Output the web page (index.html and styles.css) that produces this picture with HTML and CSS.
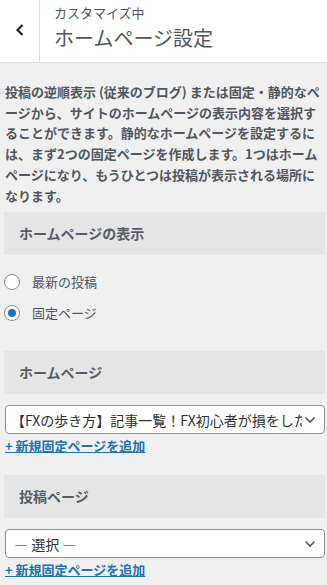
FILE: index.html
```html
<!DOCTYPE html>
<html lang="ja">
<head>
    <meta charset="UTF-8">
    <meta name="viewport" content="width=device-width, initial-scale=1.0">
    <title>ホームページ設定</title>
    <link rel="stylesheet" href="styles.css">
</head>
<body>
    <div class="header">
        <button class="back" aria-label="戻る">
            <svg width="10" height="14" viewBox="0 0 10 14"><path d="M7.5 2 L2.5 7 L7.5 12" fill="none" stroke="#1d2327" stroke-width="2.2"/></svg>
        </button>
        <div class="titles">
            <div class="sub">カスタマイズ中</div>
            <div class="main">ホームページ設定</div>
        </div>
    </div>

    <div class="content">
        <p class="desc">投稿の逆順表示 (従来のブログ) または固定・静的なページから、サイトのホームページの表示内容を選択することができます。静的なホームページを設定するには、まず2つの固定ページを作成します。1つはホームページになり、もうひとつは投稿が表示される場所になります。</p>

        <div class="section-title first">ホームページの表示</div>
        <div class="radios">
            <label class="radio"><span class="dot"></span>最新の投稿</label>
            <label class="radio"><span class="dot checked"></span>固定ページ</label>
        </div>

        <div class="section-title">ホームページ</div>
        <div class="select">
            <span class="value">【FXの歩き方】記事一覧！FX初心者が損をした理由</span>
            <svg class="chev" width="12" height="8" viewBox="0 0 12 8"><path d="M1.5 1.5 L6 6 L10.5 1.5" fill="none" stroke="#50575e" stroke-width="1.6"/></svg>
        </div>
        <a class="add" href="#">+ 新規固定ページを追加</a>

        <div class="section-title after-link">投稿ページ</div>
        <div class="select">
            <span class="value plain">— 選択 —</span>
            <svg class="chev" width="12" height="8" viewBox="0 0 12 8"><path d="M1.5 1.5 L6 6 L10.5 1.5" fill="none" stroke="#50575e" stroke-width="1.6"/></svg>
        </div>
        <a class="add" href="#">+ 新規固定ページを追加</a>
    </div>
</body>
</html>
```

FILE: styles.css
```css
* {
    margin: 0;
    padding: 0;
    box-sizing: border-box;
}

body {
    background-color: #f0f0f1;
    font-family: "Noto Sans CJK JP", "Noto Sans", sans-serif;
    color: #50575e;
    overflow: hidden;
}

.header {
    display: flex;
    height: 63px;
    background-color: #fff;
    border-bottom: 1px solid #dcdcde;
}

.back {
    width: 40px;
    border: none;
    border-right: 1px solid #dcdcde;
    background: #fff;
    display: flex;
    align-items: center;
    justify-content: center;
    padding-bottom: 2px;
}

.titles {
    padding: 4px 0 0 14px;
}

.sub {
    font-size: 13px;
    line-height: 18px;
    color: #50575e;
}

.main {
    font-size: 20px;
    line-height: 30px;
    margin-top: 1px;
    color: #50575e;
}

.content {
    padding: 0 2px 0 4px;
}

.desc {
    margin-top: 19px;
    padding-left: 1px;
    font-size: 13px;
    line-height: 20.7px;
    font-weight: bold;
    color: #50575e;
}

.section-title {
    height: 43px;
    line-height: 43px;
    margin-top: 23px;
    padding-left: 15px;
    background-color: #e5e5e5;
    font-size: 14px;
    font-weight: bold;
    color: #555d66;
}

.section-title.first {
    margin-top: 6px;
}

.section-title.after-link {
    margin-top: 20px;
}

.radios {
    margin-top: 11px;
}

.radio {
    display: flex;
    align-items: center;
    height: 31px;
    font-size: 13px;
    color: #50575e;
}

.dot {
    width: 16px;
    height: 16px;
    border: 1px solid #8c8f94;
    border-radius: 50%;
    background-color: #fff;
    margin-right: 12px;
    display: flex;
    align-items: center;
    justify-content: center;
}

.dot.checked::after {
    content: "";
    width: 8px;
    height: 8px;
    border-radius: 50%;
    background-color: #2271b1;
}

.select {
    display: flex;
    align-items: center;
    height: 29px;
    margin: 11px 0 0 1px;
    padding: 0 8px 0 5px;
    background-color: #fff;
    border: 1px solid #8c8f94;
    border-radius: 4px;
    font-size: 14px;
    color: #2c3338;
}

.value {
    flex: 1;
    white-space: nowrap;
    overflow: hidden;
    margin-right: 2px;
}

.value.plain {
    padding-left: 3px;
}

.chev {
    flex-shrink: 0;
}

.add {
    display: block;
    margin: 3px 0 0 1px;
    font-size: 13px;
    line-height: 18px;
    font-weight: bold;
    color: #2271b1;
    text-decoration: underline;
}
```
